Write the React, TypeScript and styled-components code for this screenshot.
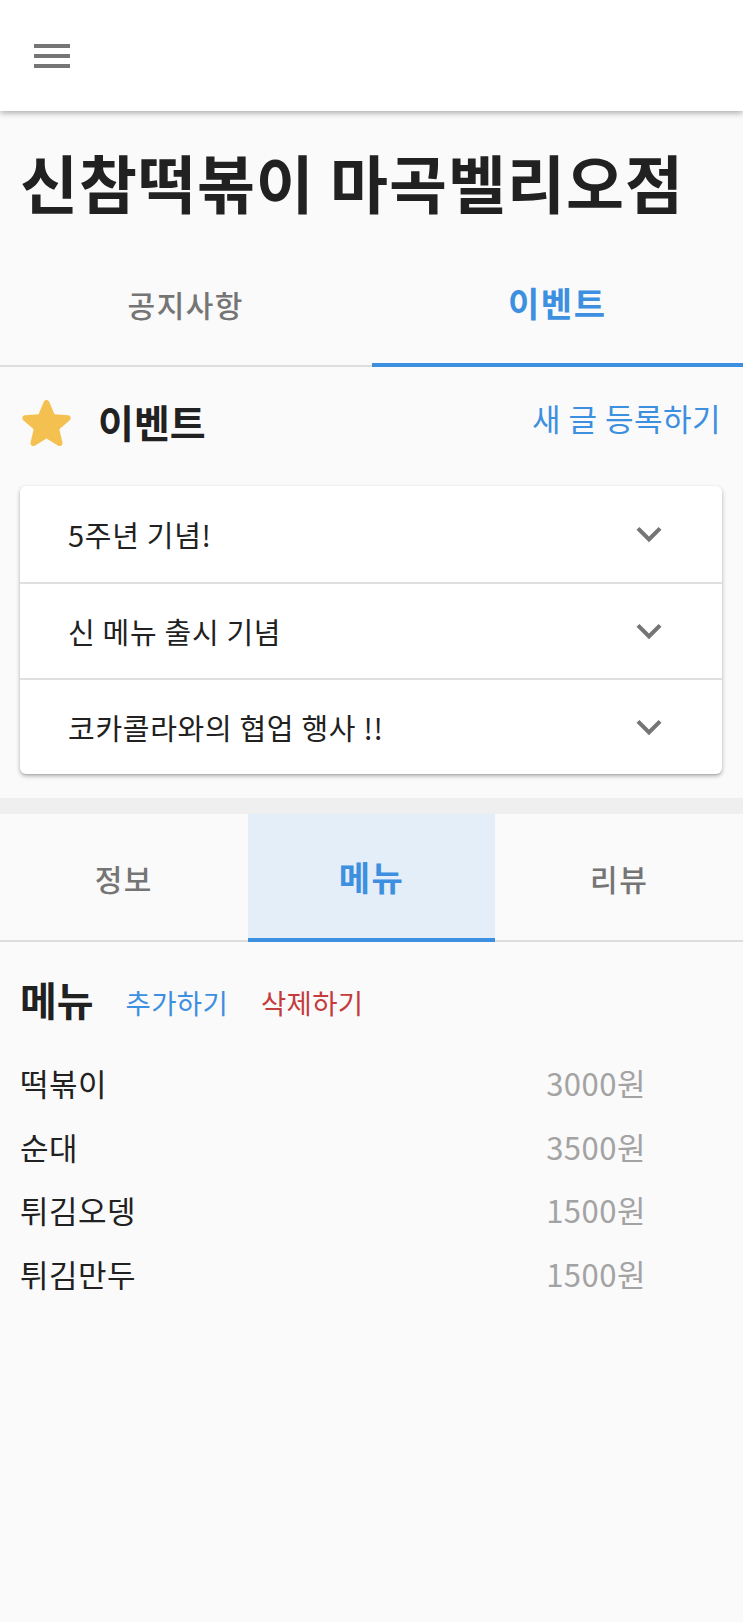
import React from "react";
import styled, { createGlobalStyle } from "styled-components";

const GlobalStyle = createGlobalStyle`
  html, body {
    margin: 0;
    padding: 0;
    background: #fafafa;
    font-family: "Noto Sans CJK KR", "Noto Sans", sans-serif;
    color: #212121;
  }
  * { box-sizing: border-box; }
`;

const BLUE = "#3d8fe0";
const RED = "#c43c3c";
const GRAY_TEXT = "#757575";

const Page = styled.div`
  width: 743px;
  min-height: 1622px;
  background: #fafafa;
  display: flex;
  flex-direction: column;
`;

const AppBar = styled.header`
  height: 111px;
  background: #ffffff;
  box-shadow: 0 2px 6px rgba(0, 0, 0, 0.32);
  display: flex;
  align-items: center;
  padding-left: 28px;
  position: relative;
  z-index: 2;
`;

const IconButton = styled.button`
  width: 48px;
  height: 48px;
  border: none;
  background: transparent;
  padding: 0;
  display: flex;
  align-items: center;
  justify-content: center;
`;

const TitleSection = styled.section`
  padding: 30px 20px 20px;
`;

const StoreTitle = styled.h1`
  margin: 0;
  height: 80px;
  line-height: 80px;
  font-size: 63px;
  font-weight: 700;
  letter-spacing: 1px;
  color: #212121;
  white-space: nowrap;
`;

const TabRow = styled.div`
  display: flex;
`;

const Tab = styled.div<{ $active?: boolean; $height: number; $tint?: boolean }>`
  flex: 1;
  height: ${(p) => p.$height}px;
  display: flex;
  align-items: center;
  justify-content: center;
  font-size: ${(p) => (p.$active ? 34 : 30)}px;
  letter-spacing: ${(p) => (p.$active ? 1.5 : 1.5)}px;
  font-weight: ${(p) => (p.$active ? 700 : 500)};
  color: ${(p) => (p.$active ? BLUE : GRAY_TEXT)};
  background: ${(p) => (p.$active && p.$tint ? "#e3eef9" : "transparent")};
  border-bottom: ${(p) => (p.$active ? `4px solid ${BLUE}` : "2px solid #dddddd")};
  padding-top: ${(p) => (p.$active ? 0 : 2)}px;
`;

const SectionHeader = styled.div`
  margin-top: 29px;
  height: 50px;
  display: flex;
  align-items: center;
  padding: 0 22px 0 21px;
`;

const SectionTitle = styled.h2`
  margin: 0 0 0 26px;
  font-size: 39px;
  font-weight: 700;
  color: #212121;
  flex: 1;
`;

const LinkText = styled.span<{ $color: string; $size: number; $lift?: number }>`
  font-size: ${(p) => p.$size}px;
  color: ${(p) => p.$color};
  font-weight: 400;
  letter-spacing: 0.5px;
  white-space: nowrap;
  margin-bottom: ${(p) => p.$lift ?? 0}px;
`;

const Card = styled.div`
  margin: 40px 21px 24px 20px;
  background: #ffffff;
  border-radius: 6px;
  box-shadow: 0 2px 4px rgba(0, 0, 0, 0.3), 0 1px 1px rgba(0, 0, 0, 0.08);
  overflow: hidden;
`;

const AccordionRow = styled.div`
  height: 96px;
  display: flex;
  align-items: center;
  justify-content: space-between;
  padding: 0 48px 0 48px;
  font-size: 29px;
  letter-spacing: 0.7px;
  color: #212121;
  & + & {
    border-top: 2px solid #e0e0e0;
  }
`;

const Band = styled.div`
  height: 16px;
  background: #efefef;
`;

const MenuHeader = styled.div`
  margin-top: 36px;
  height: 42px;
  display: flex;
  align-items: center;
  padding-left: 20px;
`;

const MenuTitle = styled.h2`
  margin: 0 32px 0 0;
  font-size: 40px;
  font-weight: 700;
  color: #212121;
`;

const HeaderAction = styled.span<{ $color: string }>`
  font-size: 27.5px;
  color: ${(p) => p.$color};
  margin-right: 33px;
  margin-top: 6px;
  letter-spacing: 0.3px;
`;

const MenuList = styled.ul`
  list-style: none;
  margin: 31px 0 0;
  padding: 0;
`;

const MenuItem = styled.li`
  height: 63.5px;
  display: flex;
  align-items: center;
  justify-content: space-between;
  padding: 0 97px 0 20px;
  font-size: 31px;
  letter-spacing: 0.5px;
  color: #212121;
`;

const Price = styled.span`
  color: #a3a3a3;
  font-size: 31px;
  letter-spacing: 0.5px;
`;

const MenuIcon = () => (
  <svg width="48" height="48" viewBox="0 0 48 48" fill={GRAY_TEXT}>
    <rect x="6" y="12" width="36" height="4" />
    <rect x="6" y="22" width="36" height="4" />
    <rect x="6" y="32" width="36" height="4" />
  </svg>
);

const StarIcon = () => (
  <svg width="51" height="50" viewBox="3.3 2.2 17.4 17.7" fill="#f4c150">
    <path d="M12 17.27l4.15 2.51c.76.46 1.69-.22 1.490-1.08l-1.1-4.72 3.67-3.18c.67-.58.31-1.68-.57-1.75l-4.83-.41-1.89-4.46c-.34-.81-1.5-.81-1.84 0L9.19 8.63l-4.83.41c-.88.07-1.24 1.17-.57 1.75l3.67 3.18-1.1 4.72c-.2.86.73 1.54 1.49 1.08l4.15-2.5z" />
  </svg>
);

const ChevronIcon = () => (
  <svg width="50" height="50" viewBox="0 0 24 24" fill={GRAY_TEXT}>
    <path d="M16.59 8.59L12 13.17 7.41 8.59 6 10l6 6 6-6z" />
  </svg>
);

const events = ["5주년 기념!", "신 메뉴 출시 기념", "코카콜라와의 협업 행사 !!"];
const menus = [
  { name: "떡볶이", price: "3000원" },
  { name: "순대", price: "3500원" },
  { name: "튀김오뎅", price: "1500원" },
  { name: "튀김만두", price: "1500원" },
];

export default function App() {
  return (
    <>
      <GlobalStyle />
      <Page>
        <AppBar>
          <IconButton aria-label="menu">
            <MenuIcon />
          </IconButton>
        </AppBar>

        <TitleSection>
          <StoreTitle>신참떡볶이 마곡벨리오점</StoreTitle>
        </TitleSection>

        <TabRow>
          <Tab $height={126}>공지사항</Tab>
          <Tab $height={126} $active>
            이벤트
          </Tab>
        </TabRow>

        <SectionHeader>
          <StarIcon />
          <SectionTitle>이벤트</SectionTitle>
          <LinkText $color={BLUE} $size={31} $lift={8}>
            새 글 등록하기
          </LinkText>
        </SectionHeader>

        <Card>
          {events.map((e) => (
            <AccordionRow key={e}>
              <span>{e}</span>
              <ChevronIcon />
            </AccordionRow>
          ))}
        </Card>

        <Band />

        <TabRow>
          <Tab $height={128}>정보</Tab>
          <Tab $height={128} $active $tint>
            메뉴
          </Tab>
          <Tab $height={128}>리뷰</Tab>
        </TabRow>

        <MenuHeader>
          <MenuTitle>메뉴</MenuTitle>
          <HeaderAction $color={BLUE}>추가하기</HeaderAction>
          <HeaderAction $color={RED}>삭제하기</HeaderAction>
        </MenuHeader>

        <MenuList>
          {menus.map((m) => (
            <MenuItem key={m.name}>
              <span>{m.name}</span>
              <Price>{m.price}</Price>
            </MenuItem>
          ))}
        </MenuList>
      </Page>
    </>
  );
}
